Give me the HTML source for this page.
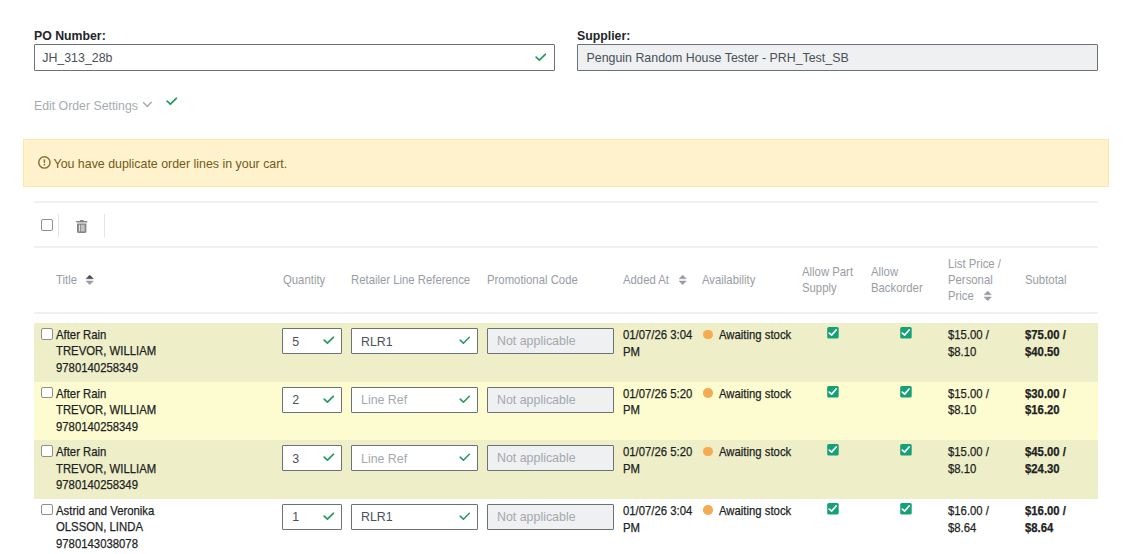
<!DOCTYPE html>
<html><head><meta charset="utf-8">
<style>
*{box-sizing:border-box;margin:0;padding:0}
html,body{width:1140px;height:554px;overflow:hidden;background:#fff}
body{position:relative;font-family:"Liberation Sans",sans-serif;color:#212529}
.a{position:absolute;white-space:nowrap}
.lbl{position:absolute;font-weight:bold;font-size:12.3px;line-height:14px;color:#212529;white-space:nowrap}
.inp{position:absolute;border:1px solid #6c7077;border-radius:1px;background:#fff;font-size:12.4px;color:#495057}
.inp span{position:absolute;left:8px;top:5.8px;line-height:15px;white-space:nowrap}
.dis{background:#eef0f2}
.hr{position:absolute;left:34px;width:1064px;height:2px;background:#eef0f1}
.th{position:absolute;font-size:12.8px;line-height:16px;color:#989da3;white-space:nowrap;transform:scaleX(0.886);transform-origin:0 0}
.td{position:absolute;font-size:12.8px;line-height:16.7px;color:#1c1f23;-webkit-text-stroke:0.25px #1c1f23;white-space:nowrap;transform:scaleX(0.886);transform-origin:0 0}
.cb{position:absolute;width:11.5px;height:11.5px;border:1px solid #8f8f8f;border-radius:2px;background:#fff}
</style></head><body>

<div class="lbl" style="left:34px;top:28.6px">PO Number:</div>
<div class="inp" style="left:34px;top:44px;width:521px;height:27px"><span style="left:7.2px;top:5.8px">JH_313_28b</span><svg class="a" style="left:499.85px;top:8.1px" width="12" height="9" viewBox="0 0 12 9"><path d="M1.2 4.2 L4.4 7.2 L10.3 1.3" fill="none" stroke="#2a9a62" stroke-width="1.8" stroke-linecap="round" stroke-linejoin="round"/></svg></div>
<div class="lbl" style="left:577px;top:28.6px">Supplier:</div>
<div class="inp dis" style="left:577px;top:44px;width:521px;height:27px"><span style="left:8.5px;top:5.8px">Penguin Random House Tester - PRH_Test_SB</span></div>
<div class="a" style="left:34px;top:99px;font-size:12.3px;line-height:15px;color:#a7acb1">Edit Order Settings</div>
<svg class="a" style="left:142px;top:101px" width="11" height="7" viewBox="0 0 11 7"><path d="M1.15 1.3 L5.35 5.6 L9.6 1.1" fill="none" stroke="#a2a7ad" stroke-width="1.4"/></svg>
<svg class="a" style="left:166.2px;top:96.7px" width="12" height="9" viewBox="0 0 12 9"><path d="M1.2 4.2 L4.4 7.2 L10.3 1.3" fill="none" stroke="#2a9a62" stroke-width="1.8" stroke-linecap="round" stroke-linejoin="round"/></svg>
<div class="a" style="left:23px;top:139px;width:1086px;height:48px;background:#fff2cc;border:1px solid #ffe6a3"></div>
<svg class="a" style="left:38px;top:156px" width="13" height="13" viewBox="0 0 13 13"><circle cx="6.4" cy="6.45" r="5.65" fill="none" stroke="#857037" stroke-width="1.45"/><path d="M5.5 3.5 H7.3 L6.95 7.3 H5.85 Z" fill="#857037"/><circle cx="6.4" cy="8.75" r="0.85" fill="#857037"/></svg>
<div class="a" style="left:53.5px;top:156.5px;font-size:12.4px;line-height:15px;color:#725a1a">You have duplicate order lines in your cart.</div>
<div class="hr" style="top:201px"></div>
<div class="cb" style="left:41px;top:219px"></div>
<div class="a" style="left:58px;top:214px;width:1px;height:23px;background:#e3e5e7"></div>
<svg class="a" style="left:76px;top:219px" width="12" height="14" viewBox="0 0 12 14"><rect x="3.9" y="1" width="3.85" height="1.4" rx="0.5" fill="#858585"/><path d="M0.1 2.1 H11.3 L11.1 3.4 H0.3 Z" fill="#858585"/><path d="M1 4.6 H10.4 V12.6 Q10.4 13.9 9.1 13.9 H2.3 Q1 13.9 1 12.6 Z" fill="#858585"/><rect x="2.9" y="5.8" width="1.1" height="6.6" fill="#e2e2e2"/><rect x="4.8" y="5.8" width="3.9" height="6.6" fill="#c2c2c2"/></svg>
<div class="a" style="left:104px;top:214px;width:1px;height:23px;background:#e3e5e7"></div>
<div class="hr" style="top:246px"></div>
<div class="th" style="left:56px;top:272px">Title</div>
<svg class="a" style="left:86px;top:275px" width="8" height="10" viewBox="0 0 8 10"><path d="M3.7 0.1 L7.4 3.8 H0 Z" fill="#434955" stroke="#434955" stroke-width="0.4" stroke-linejoin="round"/><path d="M3.7 9.8 L7.4 5.9 H0 Z" fill="#999da3" stroke="#999da3" stroke-width="0.4" stroke-linejoin="round"/></svg>
<div class="th" style="left:282.7px;top:272px">Quantity</div>
<div class="th" style="left:351px;top:272px">Retailer Line Reference</div>
<div class="th" style="left:487px;top:272px">Promotional Code</div>
<div class="th" style="left:623px;top:272px">Added At</div>
<svg class="a" style="left:678.6px;top:275px" width="8" height="10" viewBox="0 0 8 10"><path d="M3.7 0.1 L7.4 3.8 H0 Z" fill="#999da3" stroke="#999da3" stroke-width="0.4" stroke-linejoin="round"/><path d="M3.7 9.8 L7.4 5.9 H0 Z" fill="#999da3" stroke="#999da3" stroke-width="0.4" stroke-linejoin="round"/></svg>
<div class="th" style="left:702px;top:272px">Availability</div>
<div class="th" style="left:802px;top:264px">Allow Part<br>Supply</div>
<div class="th" style="left:871px;top:264px">Allow<br>Backorder</div>
<div class="th" style="left:948px;top:256px">List Price /<br>Personal<br>Price</div>
<svg class="a" style="left:983.8px;top:291px" width="8" height="10" viewBox="0 0 8 10"><path d="M3.7 0.1 L7.4 3.8 H0 Z" fill="#999da3" stroke="#999da3" stroke-width="0.4" stroke-linejoin="round"/><path d="M3.7 9.8 L7.4 5.9 H0 Z" fill="#999da3" stroke="#999da3" stroke-width="0.4" stroke-linejoin="round"/></svg>
<div class="th" style="left:1025px;top:272px">Subtotal</div>
<div class="hr" style="top:312px"></div>
<div class="a" style="left:34px;top:323.00px;width:1064px;height:58.620000000000005px;background:#eeeec8"></div>
<div class="cb" style="left:41px;top:328.00px"></div>
<div class="td" style="left:56px;top:327.00px;line-height:16.45px">After Rain<br>TREVOR, WILLIAM<br>9780140258349</div>
<div class="inp" style="left:282px;top:328.00px;width:60px;height:26px"><span style="left:9.3px;top:5.5px">5</span><svg class="a" style="left:40.0px;top:7.2px" width="12" height="9" viewBox="0 0 12 9"><path d="M1.2 4.2 L4.4 7.2 L10.3 1.3" fill="none" stroke="#2a9a62" stroke-width="1.75" stroke-linecap="round" stroke-linejoin="round"/></svg></div>
<div class="inp" style="left:351px;top:328.00px;width:127px;height:26px"><span style="left:9px;top:5.5px;color:#495057">RLR1</span><svg class="a" style="left:107.2px;top:7.2px" width="12" height="9" viewBox="0 0 12 9"><path d="M1.2 4.2 L4.4 7.2 L10.3 1.3" fill="none" stroke="#2a9a62" stroke-width="1.6" stroke-linecap="round" stroke-linejoin="round"/></svg></div>
<div class="inp dis" style="left:487px;top:328.00px;width:127px;height:26px"><span style="left:9px;top:5.3px;color:#a4a9ae">Not applicable</span></div>
<div class="td" style="left:623px;top:327.00px">01/07/26 3:04<br>PM</div>
<div class="a" style="left:703.2px;top:329.60px;width:9.6px;height:9.6px;border-radius:50%;background:#f5ab52"></div>
<div class="td" style="left:719px;top:327.00px">Awaiting stock</div>
<svg class="a" style="left:826.7px;top:327.20px" width="12" height="12" viewBox="0 0 12 12"><rect x="0.2" y="0" width="11.5" height="11.5" rx="1.6" fill="#16a077"/><path d="M2.3 6.1 L4.6 8.1 L9.1 3" fill="none" stroke="#fff" stroke-width="1.7" stroke-linecap="round" stroke-linejoin="round"/></svg>
<svg class="a" style="left:899.7px;top:327.20px" width="12" height="12" viewBox="0 0 12 12"><rect x="0.2" y="0" width="11.5" height="11.5" rx="1.6" fill="#16a077"/><path d="M2.3 6.1 L4.6 8.1 L9.1 3" fill="none" stroke="#fff" stroke-width="1.7" stroke-linecap="round" stroke-linejoin="round"/></svg>
<div class="td" style="left:948px;top:327.00px">$15.00 /<br>$8.10</div>
<div class="td" style="left:1025px;top:327.00px;font-weight:bold">$75.00 /<br>$40.50</div>
<div class="a" style="left:34px;top:381.60px;width:1064px;height:58.620000000000005px;background:#fdfbd0"></div>
<div class="cb" style="left:41px;top:386.60px"></div>
<div class="td" style="left:56px;top:385.60px;line-height:16.45px">After Rain<br>TREVOR, WILLIAM<br>9780140258349</div>
<div class="inp" style="left:282px;top:386.60px;width:60px;height:26px"><span style="left:9.3px;top:5.5px">2</span><svg class="a" style="left:40.0px;top:7.2px" width="12" height="9" viewBox="0 0 12 9"><path d="M1.2 4.2 L4.4 7.2 L10.3 1.3" fill="none" stroke="#2a9a62" stroke-width="1.75" stroke-linecap="round" stroke-linejoin="round"/></svg></div>
<div class="inp" style="left:351px;top:386.60px;width:127px;height:26px"><span style="left:9px;top:5.5px;color:#a4a9ae">Line Ref</span><svg class="a" style="left:107.2px;top:7.2px" width="12" height="9" viewBox="0 0 12 9"><path d="M1.2 4.2 L4.4 7.2 L10.3 1.3" fill="none" stroke="#2a9a62" stroke-width="1.6" stroke-linecap="round" stroke-linejoin="round"/></svg></div>
<div class="inp dis" style="left:487px;top:386.60px;width:127px;height:26px"><span style="left:9px;top:5.3px;color:#a4a9ae">Not applicable</span></div>
<div class="td" style="left:623px;top:385.60px">01/07/26 5:20<br>PM</div>
<div class="a" style="left:703.2px;top:388.20px;width:9.6px;height:9.6px;border-radius:50%;background:#f5ab52"></div>
<div class="td" style="left:719px;top:385.60px">Awaiting stock</div>
<svg class="a" style="left:826.7px;top:385.80px" width="12" height="12" viewBox="0 0 12 12"><rect x="0.2" y="0" width="11.5" height="11.5" rx="1.6" fill="#16a077"/><path d="M2.3 6.1 L4.6 8.1 L9.1 3" fill="none" stroke="#fff" stroke-width="1.7" stroke-linecap="round" stroke-linejoin="round"/></svg>
<svg class="a" style="left:899.7px;top:385.80px" width="12" height="12" viewBox="0 0 12 12"><rect x="0.2" y="0" width="11.5" height="11.5" rx="1.6" fill="#16a077"/><path d="M2.3 6.1 L4.6 8.1 L9.1 3" fill="none" stroke="#fff" stroke-width="1.7" stroke-linecap="round" stroke-linejoin="round"/></svg>
<div class="td" style="left:948px;top:385.60px">$15.00 /<br>$8.10</div>
<div class="td" style="left:1025px;top:385.60px;font-weight:bold">$30.00 /<br>$16.20</div>
<div class="a" style="left:34px;top:440.20px;width:1064px;height:58.620000000000005px;background:#eeeec8"></div>
<div class="cb" style="left:41px;top:445.20px"></div>
<div class="td" style="left:56px;top:444.20px;line-height:16.45px">After Rain<br>TREVOR, WILLIAM<br>9780140258349</div>
<div class="inp" style="left:282px;top:445.20px;width:60px;height:26px"><span style="left:9.3px;top:5.5px">3</span><svg class="a" style="left:40.0px;top:7.2px" width="12" height="9" viewBox="0 0 12 9"><path d="M1.2 4.2 L4.4 7.2 L10.3 1.3" fill="none" stroke="#2a9a62" stroke-width="1.75" stroke-linecap="round" stroke-linejoin="round"/></svg></div>
<div class="inp" style="left:351px;top:445.20px;width:127px;height:26px"><span style="left:9px;top:5.5px;color:#a4a9ae">Line Ref</span><svg class="a" style="left:107.2px;top:7.2px" width="12" height="9" viewBox="0 0 12 9"><path d="M1.2 4.2 L4.4 7.2 L10.3 1.3" fill="none" stroke="#2a9a62" stroke-width="1.6" stroke-linecap="round" stroke-linejoin="round"/></svg></div>
<div class="inp dis" style="left:487px;top:445.20px;width:127px;height:26px"><span style="left:9px;top:5.3px;color:#a4a9ae">Not applicable</span></div>
<div class="td" style="left:623px;top:444.20px">01/07/26 5:20<br>PM</div>
<div class="a" style="left:703.2px;top:446.80px;width:9.6px;height:9.6px;border-radius:50%;background:#f5ab52"></div>
<div class="td" style="left:719px;top:444.20px">Awaiting stock</div>
<svg class="a" style="left:826.7px;top:444.40px" width="12" height="12" viewBox="0 0 12 12"><rect x="0.2" y="0" width="11.5" height="11.5" rx="1.6" fill="#16a077"/><path d="M2.3 6.1 L4.6 8.1 L9.1 3" fill="none" stroke="#fff" stroke-width="1.7" stroke-linecap="round" stroke-linejoin="round"/></svg>
<svg class="a" style="left:899.7px;top:444.40px" width="12" height="12" viewBox="0 0 12 12"><rect x="0.2" y="0" width="11.5" height="11.5" rx="1.6" fill="#16a077"/><path d="M2.3 6.1 L4.6 8.1 L9.1 3" fill="none" stroke="#fff" stroke-width="1.7" stroke-linecap="round" stroke-linejoin="round"/></svg>
<div class="td" style="left:948px;top:444.20px">$15.00 /<br>$8.10</div>
<div class="td" style="left:1025px;top:444.20px;font-weight:bold">$45.00 /<br>$24.30</div>
<div class="a" style="left:34px;top:498.80px;width:1064px;height:58.620000000000005px;background:#ffffff"></div>
<div class="cb" style="left:41px;top:503.80px"></div>
<div class="td" style="left:56px;top:502.80px;line-height:16.45px">Astrid and Veronika<br>OLSSON, LINDA<br>9780143038078</div>
<div class="inp" style="left:282px;top:503.80px;width:60px;height:26px"><span style="left:9.3px;top:5.5px">1</span><svg class="a" style="left:40.0px;top:7.2px" width="12" height="9" viewBox="0 0 12 9"><path d="M1.2 4.2 L4.4 7.2 L10.3 1.3" fill="none" stroke="#2a9a62" stroke-width="1.75" stroke-linecap="round" stroke-linejoin="round"/></svg></div>
<div class="inp" style="left:351px;top:503.80px;width:127px;height:26px"><span style="left:9px;top:5.5px;color:#495057">RLR1</span><svg class="a" style="left:107.2px;top:7.2px" width="12" height="9" viewBox="0 0 12 9"><path d="M1.2 4.2 L4.4 7.2 L10.3 1.3" fill="none" stroke="#2a9a62" stroke-width="1.6" stroke-linecap="round" stroke-linejoin="round"/></svg></div>
<div class="inp dis" style="left:487px;top:503.80px;width:127px;height:26px"><span style="left:9px;top:5.3px;color:#a4a9ae">Not applicable</span></div>
<div class="td" style="left:623px;top:502.80px">01/07/26 3:04<br>PM</div>
<div class="a" style="left:703.2px;top:505.40px;width:9.6px;height:9.6px;border-radius:50%;background:#f5ab52"></div>
<div class="td" style="left:719px;top:502.80px">Awaiting stock</div>
<svg class="a" style="left:826.7px;top:503.00px" width="12" height="12" viewBox="0 0 12 12"><rect x="0.2" y="0" width="11.5" height="11.5" rx="1.6" fill="#16a077"/><path d="M2.3 6.1 L4.6 8.1 L9.1 3" fill="none" stroke="#fff" stroke-width="1.7" stroke-linecap="round" stroke-linejoin="round"/></svg>
<svg class="a" style="left:899.7px;top:503.00px" width="12" height="12" viewBox="0 0 12 12"><rect x="0.2" y="0" width="11.5" height="11.5" rx="1.6" fill="#16a077"/><path d="M2.3 6.1 L4.6 8.1 L9.1 3" fill="none" stroke="#fff" stroke-width="1.7" stroke-linecap="round" stroke-linejoin="round"/></svg>
<div class="td" style="left:948px;top:502.80px">$16.00 /<br>$8.64</div>
<div class="td" style="left:1025px;top:502.80px;font-weight:bold">$16.00 /<br>$8.64</div>
</body></html>
